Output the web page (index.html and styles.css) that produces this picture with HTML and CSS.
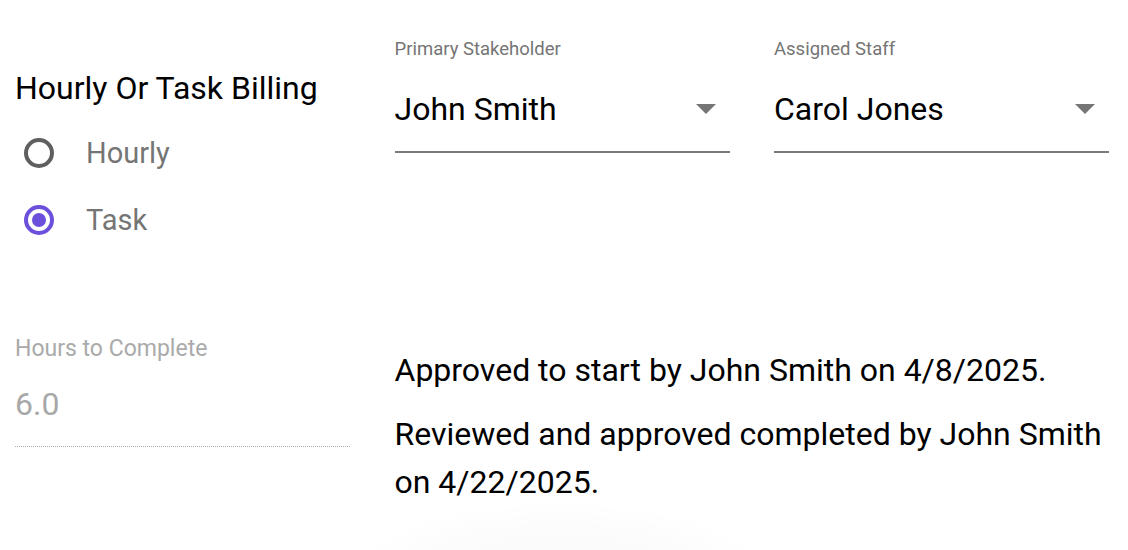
FILE: index.html
```html
<!DOCTYPE html>
<html>
<head>
<meta charset="utf-8">
<link rel="stylesheet" href="styles.css">
</head>
<body>
<div class="page">
  <div class="grid">
    <section class="billing">
      <h2 class="billing-title">Hourly Or Task Billing</h2>
      <div class="radio-row">
        <span class="radio"></span>
        <span class="radio-label">Hourly</span>
      </div>
      <div class="radio-row">
        <span class="radio radio-checked"><span class="radio-dot"></span></span>
        <span class="radio-label">Task</span>
      </div>
    </section>
    <div class="select-field">
      <div class="field-label">Primary Stakeholder</div>
      <div class="select-box">
        <span class="select-value">John Smith</span>
        <span class="select-arrow"></span>
      </div>
    </div>
    <div class="select-field">
      <div class="field-label">Assigned Staff</div>
      <div class="select-box">
        <span class="select-value">Carol Jones</span>
        <span class="select-arrow"></span>
      </div>
    </div>
    <div class="hours-field">
      <div class="hours-label">Hours to Complete</div>
      <div class="hours-value">6.0</div>
    </div>
    <div class="approvals">
      <p class="approval">Approved to start by John Smith on 4/8/2025.</p>
      <p class="approval">Reviewed and approved completed by John Smith on 4/22/2025.</p>
    </div>
  </div>
  <div class="shadow"></div>
</div>
</body>
</html>
```
FILE: styles.css
```css
html, body {
  margin: 0;
  padding: 0;
  background: #fff;
}
body {
  font-family: Roboto, "Liberation Sans", Arial, sans-serif;
  color: #000;
  width: 1128px;
  height: 550px;
  overflow: hidden;
}
.page {
  position: relative;
  height: 550px;
  padding: 0 0 0 15px;
  overflow: hidden;
}
.grid {
  display: grid;
  grid-template-columns: 335px 335px 335px;
  column-gap: 44.5px;
  grid-template-rows: 280px auto;
}
.billing {
  padding-top: 69px;
}
.billing-title {
  margin: 0;
  font-size: 32px;
  font-weight: 400;
  line-height: 38px;
  color: #000;
}
.radio-row {
  display: flex;
  align-items: center;
  height: 67px;
  margin-left: 9px;
}
.billing-title + .radio-row {
  margin-top: 12px;
}
.radio {
  box-sizing: border-box;
  width: 30px;
  height: 30px;
  border: 4px solid #5f5f5f;
  border-radius: 50%;
  display: flex;
  align-items: center;
  justify-content: center;
  flex: none;
}
.radio-checked {
  border-color: #6c4fdb;
}
.radio-dot {
  width: 14px;
  height: 14px;
  border-radius: 50%;
  background: #6c4fdb;
}
.radio-label {
  margin-left: 32px;
  font-size: 29px;
  color: #757575;
}
.select-field {
  padding-top: 38px;
}
.field-label {
  font-size: 18.5px;
  line-height: 22px;
  color: #757575;
}
.select-box {
  display: flex;
  align-items: center;
  justify-content: space-between;
  height: 40px;
  padding: 29px 0 22px 0;
  border-bottom: 2px solid #7a7a7a;
}
.select-value {
  font-size: 32px;
  line-height: 40px;
  color: #000;
}
.select-arrow {
  width: 0;
  height: 0;
  border-left: 10px solid transparent;
  border-right: 10px solid transparent;
  border-top: 10px solid #757575;
  margin-right: 14px;
}
.hours-field {
  padding-top: 56px;
}
.hours-label {
  font-size: 23px;
  line-height: 26px;
  color: #aaaaaa;
}
.hours-value {
  font-size: 32px;
  line-height: 40px;
  margin-top: 22px;
  padding-bottom: 22px;
  color: #a8a8a8;
  border-bottom: 1.5px dotted #b0b0b0;
}
.approvals {
  grid-column: 2 / span 2;
  padding-top: 66px;
}
.approval {
  margin: 0 0 16px 0;
  font-size: 32px;
  line-height: 48px;
  color: #000;
}
.shadow {
  position: absolute;
  left: 350px;
  top: 500px;
  width: 420px;
  height: 140px;
  border-radius: 50%;
  background: radial-gradient(ellipse at center, rgba(0,0,0,0.025) 0%, rgba(0,0,0,0.012) 45%, rgba(0,0,0,0) 70%);
}
```
